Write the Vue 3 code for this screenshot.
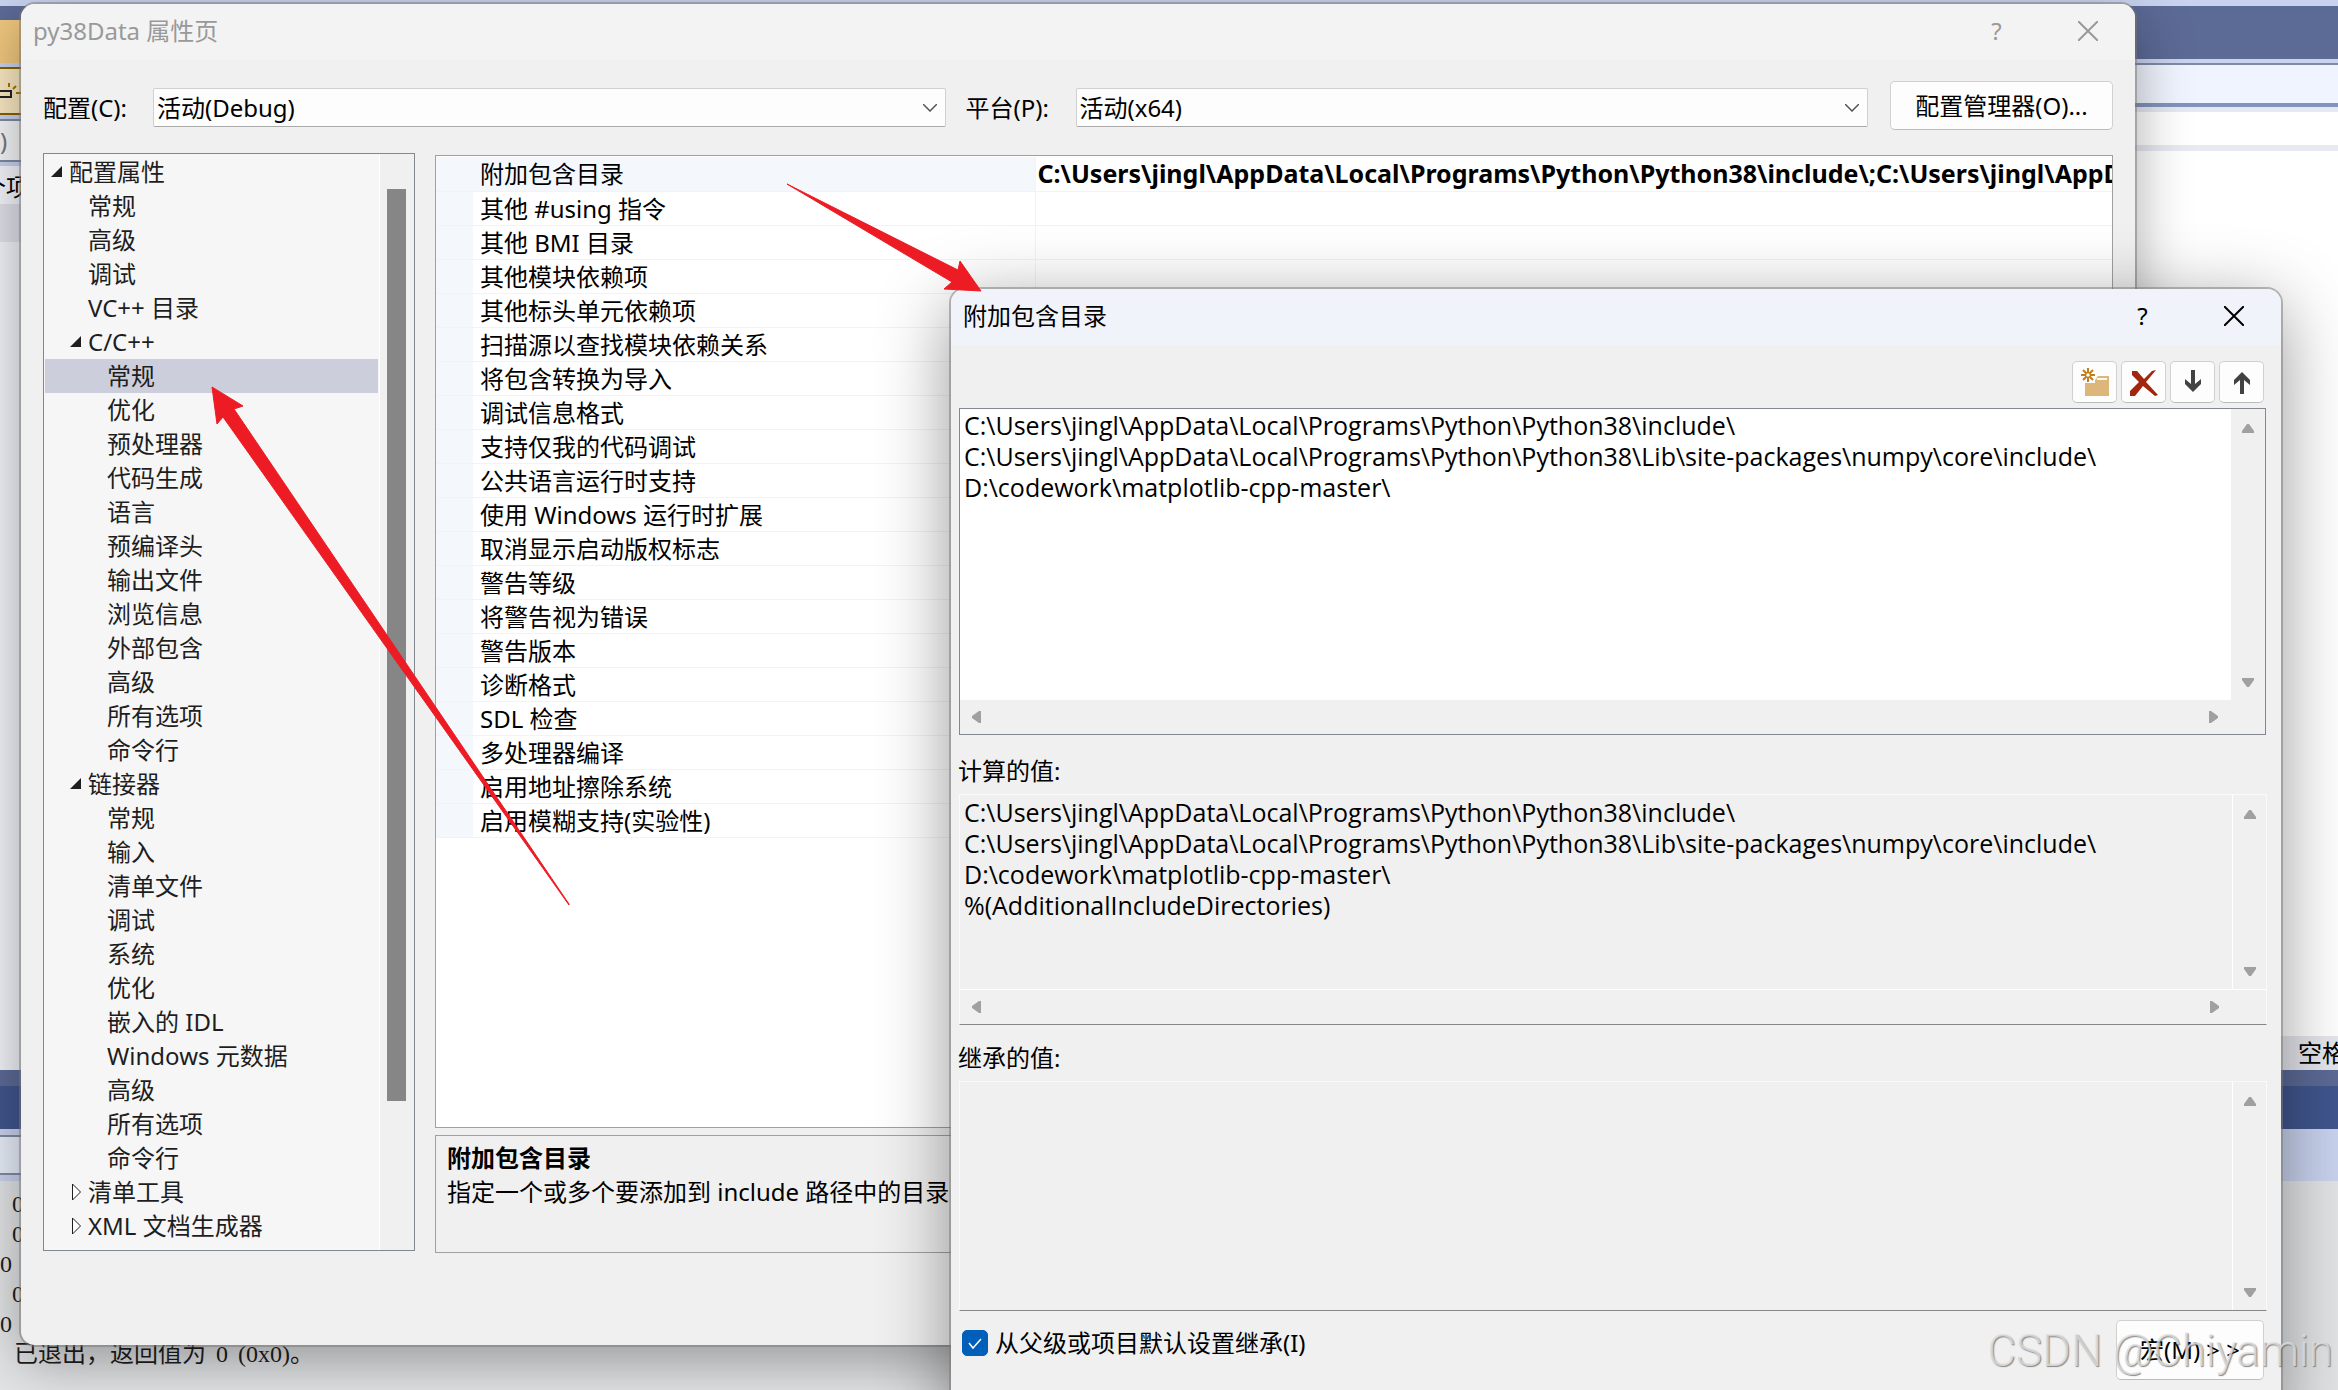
<template>
    <div class="desktop">
        <div class="ide">
            <div class="ide__top">
                <div class="ide__left">
                    <div class="band band--lavender"></div>
                    <div class="band band--caption"></div>
                    <div class="band band--tab"></div>
                    <div class="band band--tool">
                        <svg width="21" height="40" viewBox="0 0 21 40">
                            <path d="M0 20H11V26H0" fill="none" stroke="#222" stroke-width="2" />
                            <path d="M9 12V16M16 15L13 18M16 22H21" stroke="#a87400" stroke-width="2" />
                        </svg>
                    </div>
                    <div class="band band--combo">)</div>
                    <div class="band band--items">个项</div>
                    <div class="band band--row"></div>
                    <div class="band band--fill"></div>
                </div>
                <div class="ide__right">
                    <div class="band band--lavender"></div>
                    <div class="band band--header"></div>
                    <div class="band band--bar"></div>
                    <div class="band band--white"></div>
                    <div class="band band--editor"></div>
                    <div class="band band--status">空格</div>
                </div>
            </div>
            <div class="band band--divider"></div>
            <div class="band band--navy"></div>
            <div class="ide__strip">
                <div class="ide__strip-box"></div>
            </div>
            <div class="output">
                <p v-for="(line, i) in zeros" :key="i" :class="{ indent: line }">0</p>
                <p class="output__last">
                    已退出，返回值为<span class="output__code">0</span>
                    <span class="output__code">(0x0)</span>。
                </p>
            </div>
        </div>

        <section class="window window--props">
            <header class="titlebar titlebar--inactive">
                <h1>py38Data 属性页</h1>
                <button type="button" class="caption" aria-label="Help">?</button>
                <button type="button" class="caption" aria-label="Close">
                    <svg width="20" height="20" viewBox="0 0 20 20">
                        <path d="M0 0L20 20M20 0L0 20" stroke="currentColor" stroke-width="2" />
                    </svg>
                </button>
            </header>

            <div class="config">
                <div class="field">
                    <label for="config">配置(C):</label>
                    <div class="select">
                        <select id="config">
                            <option>活动(Debug)</option>
                        </select>
                        <svg class="select__arrow" width="14" height="8" viewBox="0 0 14 8">
                            <path d="M0 0L7 7L14 0" fill="none" stroke="#555" stroke-width="1.5" />
                        </svg>
                    </div>
                </div>
                <div class="field">
                    <label for="platform">平台(P):</label>
                    <div class="select">
                        <select id="platform">
                            <option>活动(x64)</option>
                        </select>
                        <svg class="select__arrow" width="14" height="8" viewBox="0 0 14 8">
                            <path d="M0 0L7 7L14 0" fill="none" stroke="#555" stroke-width="1.5" />
                        </svg>
                    </div>
                </div>
                <button type="button" class="btn btn--manager">配置管理器(O)...</button>
            </div>

            <div class="body">
                <div class="tree">
                    <ul role="tree">
                        <li
                            v-for="(node, index) in tree"
                            :key="index"
                            role="treeitem"
                            :class="['level-' + node.level, { selected: index === selected }]"
                            @click="selected = index"
                        >
                            <svg class="twisty" width="12" height="18" viewBox="0 0 12 18">
                                <path v-if="node.open === true" d="M11 3V14H0Z" fill="#1e1e1e" />
                                <path
                                    v-if="node.open === false"
                                    d="M2.5 1V17L10.5 9Z"
                                    fill="#fff"
                                    stroke="#1e1e1e"
                                />
                            </svg>
                            <span>{{ node.name }}</span>
                        </li>
                    </ul>
                    <div class="tree__scroll">
                        <div class="tree__thumb"></div>
                    </div>
                </div>

                <div class="details">
                    <div class="grid">
                        <table>
                            <tbody>
                                <tr v-for="(name, index) in options" :key="name">
                                    <td class="grid__gutter"></td>
                                    <td class="grid__name">{{ name }}</td>
                                    <td class="grid__value">{{ index === 0 ? value : "" }}</td>
                                </tr>
                            </tbody>
                        </table>
                    </div>
                    <div class="hint">
                        <h2>附加包含目录</h2>
                        <p>指定一个或多个要添加到 include 路径中的目录</p>
                    </div>
                </div>
            </div>
        </section>

        <section class="window window--dirs">
            <header class="titlebar titlebar--active">
                <h1>附加包含目录</h1>
                <button type="button" class="caption" aria-label="Help">?</button>
                <button type="button" class="caption" aria-label="Close">
                    <svg width="20" height="20" viewBox="0 0 20 20">
                        <path d="M0 0L20 20M20 0L0 20" stroke="currentColor" stroke-width="2" />
                    </svg>
                </button>
            </header>

            <div class="toolbar">
                <button type="button" class="btn btn--tool" aria-label="New line">
                    <svg width="43" height="40" viewBox="1 1 43 40">
                        <path d="M13 22H23V19L26 15H37V35H13Z" fill="#dcb67a" />
                        <path d="M25 17H35V19H25Z" fill="#fdf8ee" />
                        <path
                            d="M16 7V11M16 17V21M9 14H13M19 14H23M11 9L14 12M18 16L21 19M21 9L18 12M14 16L11 19"
                            stroke="#c27d1a"
                            stroke-width="2"
                        />
                        <circle cx="16" cy="14" r="2.5" fill="#fff" stroke="#c27d1a" stroke-width="1.5" />
                    </svg>
                </button>
                <button type="button" class="btn btn--tool" aria-label="Delete">
                    <svg width="43" height="40" viewBox="1 1 43 40">
                        <path
                            d="M11 10H16L23 18L31 10L35 9L25 21L37 34L34 35L22 25L14 35H9V30L18 21L11 14Z"
                            fill="#a1260d"
                        />
                    </svg>
                </button>
                <button type="button" class="btn btn--tool" aria-label="Move down">
                    <svg width="43" height="40" viewBox="1 1 43 40">
                        <path d="M21 9H25V23L31 18V23L23 31L15 23V18L21 23Z" fill="#424242" />
                    </svg>
                </button>
                <button type="button" class="btn btn--tool" aria-label="Move up">
                    <svg width="43" height="40" viewBox="1 1 43 40">
                        <path d="M21 33H25V19L31 24V19L23 11L15 19V24L21 19Z" fill="#424242" />
                    </svg>
                </button>
            </div>

            <div class="box box--edit">
                <textarea v-model="directories" wrap="off" aria-label="附加包含目录"></textarea>
                <div class="vbar">
                    <svg width="12" height="9" viewBox="0 0 12 9"><path :d="up" /></svg>
                    <svg width="12" height="9" viewBox="0 0 12 9"><path :d="down" /></svg>
                </div>
                <div class="hbar">
                    <svg width="9" height="12" viewBox="0 0 9 12"><path :d="left" /></svg>
                    <svg width="9" height="12" viewBox="0 0 9 12"><path :d="right" /></svg>
                </div>
            </div>

            <label class="caption-label" for="evaluated">计算的值:</label>
            <div class="box box--evaluated">
                <textarea id="evaluated" :value="evaluated" wrap="off" readonly></textarea>
                <div class="vbar">
                    <svg width="12" height="9" viewBox="0 0 12 9"><path :d="up" /></svg>
                    <svg width="12" height="9" viewBox="0 0 12 9"><path :d="down" /></svg>
                </div>
                <div class="hbar">
                    <svg width="9" height="12" viewBox="0 0 9 12"><path :d="left" /></svg>
                    <svg width="9" height="12" viewBox="0 0 9 12"><path :d="right" /></svg>
                </div>
            </div>

            <label class="caption-label caption-label--short" for="inherited">继承的值:</label>
            <div class="box box--inherited">
                <textarea id="inherited" wrap="off" readonly></textarea>
                <div class="vbar">
                    <svg width="12" height="9" viewBox="0 0 12 9"><path :d="up" /></svg>
                    <svg width="12" height="9" viewBox="0 0 12 9"><path :d="down" /></svg>
                </div>
            </div>

            <footer class="footer">
                <label class="check">
                    <span class="check__box">
                        <input v-model="inherit" type="checkbox" />
                        <svg v-if="inherit" width="26" height="26" viewBox="0 0 26 26">
                            <path d="M7 13L11 18L19 9" fill="none" stroke="#fff" stroke-width="1.5" />
                        </svg>
                    </span>
                    从父级或项目默认设置继承(I)
                </label>
                <button type="button" class="btn btn--macro">宏(M) &gt; &gt;</button>
            </footer>
        </section>

        <svg class="arrows" aria-hidden="true">
            <path d="M212 387L243 406L234 409L569 904V905L223 417L217 424Z" fill="#ed1c24" stroke="#ed1c24" />
            <path d="M787 184L958 270L960 261L981 291L944 289L952 282Z" fill="#ed1c24" stroke="#ed1c24" />
        </svg>
        <div class="watermark">CSDN @Chiyamin</div>
    </div>
</template>

<script setup>
import { ref } from "vue";

const zeros = [true, true, false, true, false];

const tree = [
    { name: "配置属性", level: 0, open: true },
    { name: "常规", level: 1 },
    { name: "高级", level: 1 },
    { name: "调试", level: 1 },
    { name: "VC++ 目录", level: 1 },
    { name: "C/C++", level: 1, open: true },
    { name: "常规", level: 2 },
    { name: "优化", level: 2 },
    { name: "预处理器", level: 2 },
    { name: "代码生成", level: 2 },
    { name: "语言", level: 2 },
    { name: "预编译头", level: 2 },
    { name: "输出文件", level: 2 },
    { name: "浏览信息", level: 2 },
    { name: "外部包含", level: 2 },
    { name: "高级", level: 2 },
    { name: "所有选项", level: 2 },
    { name: "命令行", level: 2 },
    { name: "链接器", level: 1, open: true },
    { name: "常规", level: 2 },
    { name: "输入", level: 2 },
    { name: "清单文件", level: 2 },
    { name: "调试", level: 2 },
    { name: "系统", level: 2 },
    { name: "优化", level: 2 },
    { name: "嵌入的 IDL", level: 2 },
    { name: "Windows 元数据", level: 2 },
    { name: "高级", level: 2 },
    { name: "所有选项", level: 2 },
    { name: "命令行", level: 2 },
    { name: "清单工具", level: 1, open: false },
    { name: "XML 文档生成器", level: 1, open: false },
];
const selected = ref(6);

const options = [
    "附加包含目录",
    "其他 #using 指令",
    "其他 BMI 目录",
    "其他模块依赖项",
    "其他标头单元依赖项",
    "扫描源以查找模块依赖关系",
    "将包含转换为导入",
    "调试信息格式",
    "支持仅我的代码调试",
    "公共语言运行时支持",
    "使用 Windows 运行时扩展",
    "取消显示启动版权标志",
    "警告等级",
    "将警告视为错误",
    "警告版本",
    "诊断格式",
    "SDL 检查",
    "多处理器编译",
    "启用地址擦除系统",
    "启用模糊支持(实验性)",
];

const python = "C:\\Users\\jingl\\AppData\\Local\\Programs\\Python\\Python38\\";
const value = `${python}include\\;${python}Lib\\site-packages\\numpy\\core\\include\\`;
const directories = ref(
    [
        `${python}include\\`,
        `${python}Lib\\site-packages\\numpy\\core\\include\\`,
        "D:\\codework\\matplotlib-cpp-master\\",
    ].join("\n")
);
const evaluated = `${directories.value}\n%(AdditionalIncludeDirectories)`;
const inherit = ref(true);

// scrollbar arrow shapes
const up = "M5 0H7L12 7V9H0V7Z";
const down = "M5 9H7L12 2V0H0V2Z";
const left = "M0 5V7L7 12H9V0H7Z";
const right = "M9 5V7L2 12H0V0H2Z";
</script>

<style>
body {
    margin: 0;
    overflow: hidden;
}
</style>

<style scoped>
* {
    box-sizing: border-box;
}

h1,
h2,
p,
ul {
    margin: 0;
    padding: 0;
    font-size: inherit;
    font-weight: normal;
}

button,
select,
textarea {
    font: inherit;
    color: inherit;
}

svg {
    display: block;
    flex: none;
}

.desktop {
    position: relative;
    height: 100vh;
    overflow: hidden;
    font-family: "Noto Sans", "Noto Sans CJK SC", sans-serif;
    font-size: 24px;
    line-height: 34px;
    color: #000;
}

/* window behind the dialogs */
.ide {
    display: flex;
    flex-direction: column;
    height: 100%;
    background: #c9d3ee;
}

.ide__top {
    display: flex;
    flex: 1;
    justify-content: space-between;
    background: #fff;
}

.ide__left {
    display: flex;
    flex-direction: column;
    width: 60px;
    background: #c9d3ee;
}

.ide__right {
    display: flex;
    flex: 1;
    flex-direction: column;
}

.band {
    flex: none;
    overflow: hidden;
    white-space: nowrap;
}

.band--lavender {
    height: 6px;
    background: #c9d3ee;
}

.band--caption {
    height: 14px;
    background: #5c6a96;
}

.band--tab {
    height: 43px;
    margin-bottom: 4px;
    background: #f0c77f;
}

.band--tool {
    height: 48px;
    margin-bottom: 4px;
    padding-top: 2px;
    border: solid #8a6100;
    border-width: 2px 0;
    background: #fbe9c2;
}

.band--combo {
    height: 43px;
    margin-bottom: 4px;
    border: solid #7f8ba5;
    border-width: 2px 0;
    background: #f5f6f8;
    color: #777;
    line-height: 39px;
}

.band--items {
    height: 38px;
    padding-top: 4px;
    background: #f4f6fc;
    text-indent: -18px;
}

.band--row {
    height: 38px;
    background: #e0e1ea;
}

.band--fill {
    flex: 1;
    background: #f1f3f9;
}

.band--header {
    height: 53px;
    background: #5c6a96;
}

.band--bar {
    height: 44px;
    margin-top: 4px;
    border-top: 2px solid #7f8ba5;
    border-bottom: 4px solid #8294bd;
    background: #f0f4fe;
    box-shadow: 0 -4px #c9d3ee;
}

.band--white {
    height: 44px;
    border-top: 5px solid #e6e8f2;
    border-bottom: 6px solid #e8e9f1;
    background: #fff;
}

.band--editor {
    flex: 1;
    background: #fff;
}

.band--status {
    height: 34px;
    margin-right: -8px;
    background: #e6e7ed;
    text-align: right;
}

.band--divider {
    height: 16px;
    background: #5c6a96;
}

.band--navy {
    height: 43px;
    background: #40568d;
}

.ide__strip {
    flex: none;
    height: 52px;
    padding: 6px 0;
}

.ide__strip-box {
    width: 60px;
    height: 40px;
    border: solid #7f8ba5;
    border-width: 2px 0;
    background: #e8eef9;
}

.output {
    flex: none;
    height: 209px;
    padding-top: 8px;
    background: #e3e4e6;
    color: #1e1e1e;
    font-family: "Liberation Serif", "Noto Sans CJK SC", serif;
    line-height: 30px;
}

.output .indent {
    padding-left: 12px;
}

.output .output__last {
    padding-left: 14px;
}

.output__code {
    padding-left: 10px;
}

/* dialogs */
.window {
    position: absolute;
    display: flex;
    flex-direction: column;
    background: #f0f0f0;
}

.window--props {
    top: 4px;
    right: 203px;
    bottom: 45px;
    left: 21px;
    padding-bottom: 92px;
    border-radius: 14px;
    box-shadow: 0 0 0 2px rgba(120, 120, 120, 0.5), 0 16px 56px rgba(0, 0, 0, 0.35);
}

.window--dirs {
    top: 289px;
    right: 57px;
    bottom: -40px;
    left: 951px;
    border-radius: 14px 14px 0 0;
    box-shadow: 0 0 0 2px rgba(120, 120, 120, 0.5), 0 16px 72px rgba(0, 0, 0, 0.42);
}

.titlebar {
    display: flex;
    flex: none;
    align-items: center;
    height: 56px;
    padding: 0 2px 2px 12px;
    border-radius: 14px 14px 0 0;
}

.titlebar h1 {
    flex: 1;
}

.titlebar--inactive {
    background: #f3f3f3;
    color: #999;
}

.titlebar--active {
    background: #f1f3fa;
}

.caption {
    display: flex;
    align-items: center;
    justify-content: center;
    width: 91px;
    height: 54px;
    padding: 0;
    border: 0;
    background: none;
}

.btn {
    display: flex;
    flex: none;
    align-items: center;
    justify-content: center;
    padding: 0;
    border: 1px solid #d0d0d0;
    border-bottom-color: #bbb;
    border-radius: 5px;
    background: #fdfdfd;
}

.config {
    display: flex;
    align-items: center;
    gap: 20px;
    padding: 21px 22px 0;
}

.field {
    display: flex;
    flex: 1;
    align-items: center;
    padding-top: 4px;
}

.field label {
    width: 110px;
}

.select {
    position: relative;
    flex: 1;
}

.select select {
    display: block;
    width: 100%;
    height: 39px;
    padding: 0 3px;
    border: 1px solid #d0d0d0;
    border-bottom-color: #aaa;
    border-radius: 2px;
    background: #fdfdfd;
    appearance: none;
}

.select__arrow {
    position: absolute;
    top: 16px;
    right: 9px;
}

.btn--manager {
    width: 223px;
    height: 49px;
    margin-left: 2px;
}

.body {
    display: flex;
    flex: 1;
    gap: 20px;
    min-height: 0;
    padding: 23px 22px 0;
}

.tree {
    display: flex;
    width: 372px;
    margin-bottom: 2px;
    border: 1px solid #828790;
    background: #f6f6f6;
    color: #1e1e1e;
}

.tree ul {
    flex: 1;
    padding: 1px;
    list-style: none;
}

.tree li {
    display: flex;
    align-items: center;
    gap: 6px;
    height: 34px;
}

.level-0 {
    padding-left: 6px;
}

.level-1 {
    padding-left: 25px;
}

.level-2 {
    padding-left: 44px;
}

.tree .selected {
    background: #cccedb;
}

.tree__scroll {
    width: 35px;
    padding: 35px 8px 149px 7px;
    border-left: 1px solid #fff;
    background: #f0f0f0;
}

.tree__thumb {
    height: 100%;
    background: #868686;
}

.details {
    display: flex;
    flex: 1;
    flex-direction: column;
    gap: 7px;
    min-width: 0;
    padding-top: 2px;
}

.grid {
    flex: 1;
    overflow: hidden;
    padding-top: 1px;
    border: 1px solid #a0a0a0;
    background: #fff;
}

.grid table {
    width: 100%;
    border-collapse: collapse;
    table-layout: fixed;
}

.grid td {
    height: 34px;
    padding: 0;
    border-bottom: 1px solid #f0f3fb;
    line-height: 33px;
    white-space: nowrap;
}

.grid .grid__gutter {
    width: 37px;
    background: #f4f7fc;
}

.grid .grid__name {
    width: 562px;
    padding-left: 7px;
    border-right: 1px solid #f0f3fb;
}

.grid tr:first-child .grid__name {
    background: #f4f7fc;
}

.grid .grid__value {
    overflow: hidden;
    padding-left: 2px;
    font-size: 25px;
    font-weight: bold;
}

.hint {
    height: 118px;
    padding: 5px 11px;
    border: 1px solid #a0a0a0;
}

.hint h2 {
    font-weight: bold;
}

.toolbar {
    display: flex;
    flex: none;
    gap: 4px;
    justify-content: flex-end;
    padding: 16px 17px 5px;
}

.btn--tool {
    width: 45px;
    height: 42px;
}

.box {
    display: grid;
    flex: none;
    grid-template-columns: 1fr 34px;
    margin: 0 14px 0 8px;
}

.box textarea {
    display: block;
    width: 100%;
    height: 100%;
    padding: 2px 4px;
    border: 0;
    outline: 0;
    background: none;
    font-family: "Open Sans", "Noto Sans CJK SC", sans-serif;
    font-size: 25px;
    line-height: 31px;
    overflow: hidden;
    resize: none;
}

.box path {
    fill: #a0a0a0;
}

.box--edit {
    grid-template-rows: 1fr 34px;
    height: 327px;
    margin-right: 15px;
    border: 1px solid #828790;
    background: #fff;
}

.box--edit textarea {
    padding-top: 1px;
}

.box--edit .vbar,
.box--edit .hbar {
    background: #f0f0f0;
}

.box--evaluated,
.box--inherited {
    border: 1px solid #fafafa;
    border-bottom-color: #868686;
}

.box--evaluated {
    grid-template-rows: 1fr 35px;
    height: 231px;
}

.box--inherited {
    height: 230px;
}

.box--evaluated .vbar,
.box--inherited .vbar {
    border-left: 1px solid #fff;
}

.box--evaluated .hbar {
    border-top: 1px solid #fff;
}

.vbar {
    display: flex;
    flex-direction: column;
    align-items: center;
    justify-content: space-between;
    padding: 15px 0 13px;
}

.hbar {
    display: flex;
    grid-column: 1 / 3;
    align-items: center;
    justify-content: space-between;
    padding: 0 47px 0 12px;
}

.caption-label {
    flex: none;
    height: 59px;
    padding: 19px 0 0 7px;
}

.caption-label--short {
    height: 56px;
    padding-top: 16px;
}

.footer {
    display: flex;
    flex: none;
    align-items: flex-start;
    justify-content: space-between;
    padding: 9px 17px 0 11px;
}

.check {
    display: flex;
    align-items: center;
    gap: 7px;
    padding-top: 6px;
}

.check__box {
    position: relative;
    width: 26px;
    height: 26px;
}

.check__box input {
    display: block;
    width: 26px;
    height: 26px;
    margin: 0;
    border: 1px solid #888;
    border-radius: 5px;
    background: #fff;
    appearance: none;
}

.check__box input:checked {
    border-color: #005fb8;
    background: #005fb8;
}

.check__box svg {
    position: absolute;
    inset: 0;
    pointer-events: none;
}

.btn--macro {
    width: 148px;
    height: 60px;
}

/* red pointers drawn over everything */
.arrows {
    position: absolute;
    inset: 0;
    width: 100%;
    height: 100%;
    pointer-events: none;
}

.watermark {
    position: absolute;
    right: 5px;
    bottom: 15px;
    color: rgba(226, 226, 226, 0.8);
    font-family: Roboto, sans-serif;
    font-size: 44px;
    font-weight: 300;
    line-height: 48px;
    text-shadow: 1px 1px 1px rgba(90, 90, 90, 0.7);
    pointer-events: none;
}
</style>
